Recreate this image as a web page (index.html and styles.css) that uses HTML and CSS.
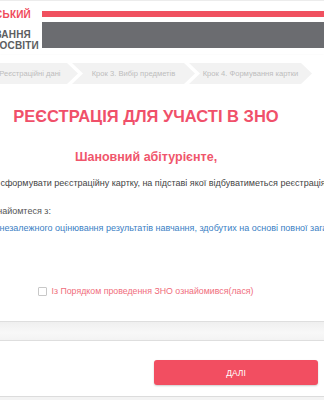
FILE: index.html
```html
<!DOCTYPE html>
<html lang="uk">
<head>
  <meta charset="UTF-8" />
  <meta name="viewport" content="width=device-width, initial-scale=1.0" />
  <title>Реєстрація для участі в ЗНО</title>
  <link rel="stylesheet" href="styles.css">
</head>
<body>

  <!-- Шапка -->
  <header class="top">
    <div class="page head">
      <div class="logo">
        <span class="logo-red">УКРАЇНСЬКИЙ</span>
        <span class="logo-mid">ЦЕНТР ОЦІНЮВАННЯ</span>
        <span class="logo-low">ЯКОСТІ ОСВІТИ</span>
      </div>
      <div class="bars">
        <div class="bar-red"></div>
        <div class="bar-gray"></div>
      </div>
    </div>
  </header>

  <!-- Картка -->
  <main class="card">
    <div class="page">
      <div class="steps">
        <div class="step">Крок 1. Персональні дані</div>
        <div class="step">Крок 2. Реєстраційні дані</div>
        <div class="step">Крок 3. Вибір предметів</div>
        <div class="step">Крок 4. Формування картки</div>
      </div>

      <h1 class="title">РЕЄСТРАЦІЯ ДЛЯ УЧАСТІ В ЗНО</h1>
      <h2 class="greet">Шановний абітурієнте,</h2>

      <div class="text">
        <p class="lead">Для участі в тестуванні Вам необхідно сформувати реєстраційну картку, на підставі якої відбуватиметься реєстрація для участі в ЗНО.</p>
        <p class="note">Перед початком реєстрації уважно ознайомтеся з:</p>
        <a class="doc" href="#">Порядком проведення зовнішнього незалежного оцінювання результатів навчання, здобутих на основі повної загальної середньої освіти</a>
      </div>

      <label class="agree">
        <input type="checkbox" />
        <span>Із Порядком проведення ЗНО ознайомився(лася)</span>
      </label>
    </div>
  </main>

  <div class="band"></div>

  <!-- Кнопки -->
  <footer class="foot">
    <div class="page foot-row">
      <div class="foot-slot"></div>
      <button class="next">ДАЛІ</button>
    </div>
  </footer>

</body>
</html>
```

FILE: styles.css
```css
* { margin: 0; padding: 0; box-sizing: border-box; }
html, body {
  width: 100%;
  height: 100%;
  background-color: #f3f3f3;
  font-family: "Liberation Sans", Arial, sans-serif;
  overflow: hidden;
}

/* широка сторінка, центр трохи лівіше за вікно */
.page {
  width: 640px;
  margin-left: -174px;
}

/* Шапка */
.top {
  background: #fff;
  border-top: 1px solid #ececec;
  height: 55px;
}
.head { display: flex; }
.logo {
  width: 216px;
  display: flex;
  flex-direction: column;
  align-items: flex-end;
  padding-top: 8px;
  padding-right: 3px;
  overflow: hidden;
  font-size: 10px;
  font-weight: bold;
  letter-spacing: 0.2px;
  line-height: 11px;
  color: #5c5d61;
  white-space: nowrap;
}
.logo-red { color: #ef4a5b; margin-right: 8px; }
.logo-mid { margin-top: 9px; margin-right: 8px; }
.bars {
  flex: 1;
  padding-top: 10px;
  display: flex;
  flex-direction: column;
  gap: 5px;
}
.bar-red { height: 6px; background: #f0505f; }
.bar-gray { height: 26px; background: #6b6c70; }

/* Картка */
.card {
  background: #fff;
  box-shadow: 0 1px 2px rgba(0, 0, 0, 0.18);
  padding-bottom: 24px;
}

.steps {
  display: flex;
  padding-top: 8px;
  padding-left: 12px;
}
.step {
  width: 123px;
  height: 21px;
  margin-right: -6px;
  background: #f2f2f2;
  color: #bdbdbd;
  font-size: 7.6px;
  line-height: 21px;
  text-align: center;
  white-space: nowrap;
  clip-path: polygon(0 0, calc(100% - 11px) 0, 100% 50%, calc(100% - 11px) 100%, 0 100%, 11px 50%);
}

.title {
  margin-top: 22px;
  text-align: center;
  color: #f0506a;
  font-size: 16.5px;
  line-height: 20px;
  font-weight: bold;
}
.greet {
  margin-top: 23px;
  text-align: center;
  color: #f0566c;
  font-size: 12.5px;
  line-height: 16px;
  font-weight: bold;
}

.text {
  padding-left: 24px;
  font-size: 9px;
  line-height: 12px;
  white-space: nowrap;
}
.lead { margin-top: 12px; color: #444; text-indent: -13px; }
.note { margin-top: 16px; color: #555; text-indent: -10px; }
.doc {
  display: block;
  margin-top: 5px;
  color: #3a80c4;
  text-decoration: none;
}

.agree {
  margin-top: 51px;
  display: flex;
  justify-content: center;
  align-items: center;
  gap: 4px;
  font-size: 8.8px;
  line-height: 12px;
  color: #f06d7c;
}
.agree input {
  appearance: none;
  width: 9px;
  height: 9px;
  border: 1px solid #c8c8c8;
  border-radius: 1px;
  background: #fff;
}

/* Смуга між блоками */
.band {
  height: 20px;
  border-top: 1px solid #dedede;
  border-bottom: 1px solid #dedede;
  background: linear-gradient(#efefef, #f8f8f8 60%, #f3f3f3);
}

/* Кнопки */
.foot {
  background: #fff;
  border-bottom: 1px solid #dcdcdc;
  height: 56px;
  padding-top: 19px;
}
.foot-row {
  display: flex;
  justify-content: center;
  gap: 16px;
}
.foot-slot { width: 164px; }
.next {
  width: 164px;
  height: 25px;
  border: none;
  border-radius: 3px;
  background: #f24e61;
  color: #fff;
  font-family: inherit;
  font-size: 8.5px;
  box-shadow: 0 1px 2px rgba(0, 0, 0, 0.2);
}
```
